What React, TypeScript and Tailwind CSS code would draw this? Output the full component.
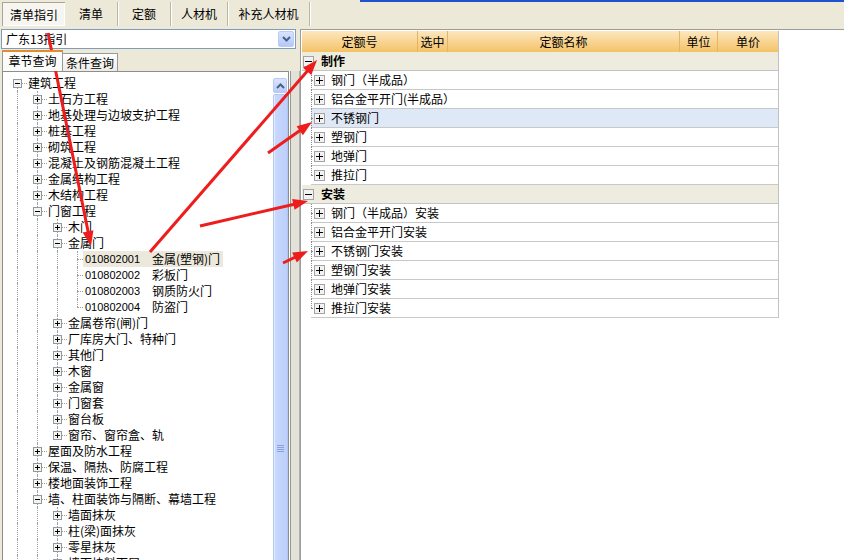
import React from "react";

type TNode = { label: string; code?: string; open?: boolean; hl?: boolean; children?: TNode[] };

const L = (label: string): TNode => ({ label, children: [] });
const leaf = (code: string, label: string, hl = false): TNode => ({ label, code, hl });

const roots: TNode[] = [
  {
    label: "建筑工程",
    open: true,
    children: [
      L("土石方工程"),
      L("地基处理与边坡支护工程"),
      L("桩基工程"),
      L("砌筑工程"),
      L("混凝土及钢筋混凝土工程"),
      L("金属结构工程"),
      L("木结构工程"),
      {
        label: "门窗工程",
        open: true,
        children: [
          L("木门"),
          {
            label: "金属门",
            open: true,
            children: [
              leaf("010802001", "金属(塑钢)门", true),
              leaf("010802002", "彩板门"),
              leaf("010802003", "钢质防火门"),
              leaf("010802004", "防盗门"),
            ],
          },
          L("金属卷帘(闸)门"),
          L("厂库房大门、特种门"),
          L("其他门"),
          L("木窗"),
          L("金属窗"),
          L("门窗套"),
          L("窗台板"),
          L("窗帘、窗帘盒、轨"),
        ],
      },
      L("屋面及防水工程"),
      L("保温、隔热、防腐工程"),
      L("楼地面装饰工程"),
      {
        label: "墙、柱面装饰与隔断、幕墙工程",
        open: true,
        children: [L("墙面抹灰"), L("柱(梁)面抹灰"), L("零星抹灰"), L("墙面块料面层"), L("柱(梁)面镶贴块料")],
      },
      L("天棚工程"),
    ],
  },
  L("安装工程"),
];

type Row = { node: TNode; depth: number; anc: boolean[]; hasNext: boolean; first: boolean };

function flatten(nodes: TNode[], depth: number, anc: boolean[], out: Row[]) {
  nodes.forEach((n, i) => {
    const hasNext = i < nodes.length - 1;
    out.push({ node: n, depth, anc, hasNext, first: depth === 0 && i === 0 });
    if (n.open && n.children) flatten(n.children, depth + 1, [...anc, hasNext], out);
  });
}

const rows: Row[] = [];
flatten(roots, 0, [], rows);

function TreeBox({ plus }: { plus: boolean }) {
  return (
    <svg width="9" height="9" className="relative block" shapeRendering="crispEdges">
      <rect x="0.5" y="0.5" width="8" height="8" fill="#f4f3ee" stroke="#8f99a3" />
      <line x1="2" y1="4.5" x2="7" y2="4.5" stroke="#000" />
      {plus && <line x1="4.5" y1="2" x2="4.5" y2="7" stroke="#000" />}
    </svg>
  );
}

function GridBox({ plus }: { plus: boolean }) {
  return (
    <svg width="11" height="11" className="relative block" shapeRendering="crispEdges">
      <rect x="0.5" y="0.5" width="10" height="10" fill="#f2f2f2" stroke="#a3a3a3" />
      <line x1="2" y1="5.5" x2="9" y2="5.5" stroke="#000" />
      {plus && <line x1="5.5" y1="2" x2="5.5" y2="9" stroke="#000" />}
    </svg>
  );
}

function TreeRow({ r }: { r: Row }) {
  const n = r.node;
  const isLeaf = !!n.code;
  return (
    <div className="flex h-[16px] items-center">
      {r.anc.map((a, i) => (
        <div key={i} className="relative h-full w-[20px] shrink-0">
          {a && <span className="absolute left-[10px] top-0 h-full border-l border-dotted border-[#a0a0a0]" />}
        </div>
      ))}
      <div
        className={`relative flex h-full shrink-0 items-center justify-center ${isLeaf ? "w-[16px]" : "w-[20px]"}`}
      >
        {!r.first && <span className="absolute left-[10px] top-0 h-[8px] border-l border-dotted border-[#a0a0a0]" />}
        {r.hasNext && <span className="absolute left-[10px] top-[8px] h-[8px] border-l border-dotted border-[#a0a0a0]" />}
        <span
          className={`absolute left-[10px] top-[8px] border-t border-dotted border-[#a0a0a0] ${isLeaf ? "w-[6px]" : "w-[10px]"}`}
        />
        {!isLeaf && <TreeBox plus={!n.open} />}
      </div>
      {isLeaf ? (
        <div className={`flex h-full items-center pl-[2px] pr-[3px] ${n.hl ? "bg-[#ece9dc]" : ""}`}>
          <span className="w-[67px] font-['Liberation_Sans',sans-serif] text-[11px] text-black">{n.code}</span>
          <span className="whitespace-nowrap">{n.label}</span>
        </div>
      ) : (
        <span className="ml-[1px] whitespace-nowrap">{n.label}</span>
      )}
    </div>
  );
}

const groups = [
  { name: "制作", items: ["钢门（半成品）", "铝合金平开门(半成品）", "不锈钢门", "塑钢门", "地弹门", "推拉门"] },
  { name: "安装", items: ["钢门（半成品）安装", "铝合金平开门安装", "不锈钢门安装", "塑钢门安装", "地弹门安装", "推拉门安装"] },
];

function Arrow({ x1, y1, x2, y2 }: { x1: number; y1: number; x2: number; y2: number }) {
  const dx = x2 - x1;
  const dy = y2 - y1;
  const len = Math.sqrt(dx * dx + dy * dy);
  const ux = dx / len;
  const uy = dy / len;
  const hl = 15;
  const hw = 5.5;
  const bx = x2 - ux * hl;
  const by = y2 - uy * hl;
  const px = -uy * hw;
  const py = ux * hw;
  return (
    <g>
      <line x1={x1} y1={y1} x2={bx + ux * 2} y2={by + uy * 2} stroke="#ee1d1d" strokeWidth="3" />
      <polygon points={`${x2},${y2} ${bx + px},${by + py} ${bx - px},${by - py}`} fill="#ee1d1d" />
    </g>
  );
}

const tabs = [
  { t: "清单", w: "w-[53px]" },
  { t: "定额", w: "w-[53px]" },
  { t: "人材机", w: "w-[57px]" },
  { t: "补充人材机", w: "w-[82px]" },
];

export default function App() {
  return (
    <div className="relative h-[560px] w-[844px] overflow-hidden bg-[#ece9d8] font-['Noto_Sans_CJK_SC',sans-serif] text-[12px] leading-none text-black">
      {/* top tab bar */}
      <div className="flex h-[29px]">
        <div className="flex pl-[2px] pt-[2px]">
          <div className="flex h-[24px] w-[63px] items-center justify-center border-l border-t border-[#a9a596] bg-[#f6f5f0] shadow-[inset_-1px_-1px_0_#ffffff]">
            清单指引
          </div>
          {tabs.map((t) => (
            <div
              key={t.t}
              className={`flex h-[24px] ${t.w} items-center justify-center border-r border-[#b9b5a7] shadow-[1px_0_0_#ffffff]`}
            >
              {t.t}
            </div>
          ))}
        </div>
        <div className="flex-1 pl-[50px]">
          <div className="h-[2px] bg-[#1f52cc]" />
        </div>
      </div>

      <div className="flex">
        {/* left column */}
        <div className="flex w-[300px] shrink-0 flex-col">
          <div className="ml-[1px] flex h-[20px] w-[295px] items-center border border-[#7f9db9] bg-white pl-[4px]">
            <span className="flex-1">广东13指引</span>
            <div className="mr-[1px] flex h-[16px] w-[16px] items-center justify-center rounded-[2px] border border-[#b9ccf5] bg-gradient-to-b from-[#d8e4fd] to-[#b4c8f8]">
              <svg width="9" height="6" viewBox="0 0 9 6">
                <path d="M1 1 L4.5 4.5 L8 1" fill="none" stroke="#4d6185" strokeWidth="2" />
              </svg>
            </div>
          </div>
          <div className="flex h-[22px] items-end pl-[2px]">
            <div className="relative z-10 flex h-[21px] w-[61px] items-center justify-center border-x border-t-[2px] border-x-[#919b9c] border-t-[#e68b2c] bg-[#fbfbf9] pb-[1px]">
              章节查询
            </div>
            <div className="flex h-[18px] w-[55px] items-center justify-center border-r border-t border-[#919b9c] bg-gradient-to-b from-[#ffffff] to-[#ecebe5] pt-[1px]">
              条件查询
            </div>
          </div>
          <div className="flex">
            <div className="relative ml-[2px] flex h-[500px] w-[287px] border border-[#8d8d8d] bg-white">
              <div className="flex-1 overflow-hidden pl-[4px] pt-[3px]">
                {rows.map((r, i) => (
                  <TreeRow key={i} r={r} />
                ))}
              </div>
              <div className="flex w-[15px] shrink-0 flex-col pt-[6px]">
                <div className="flex h-[15px] w-[14px] items-center justify-center rounded-[2px] border border-[#b7c9f3] bg-gradient-to-b from-[#dbe6fd] to-[#b8cbf9]">
                  <svg width="9" height="6" viewBox="0 0 9 6">
                    <path d="M1 5 L4.5 1.5 L8 5" fill="none" stroke="#4d6185" strokeWidth="2" />
                  </svg>
                </div>
                <div className="mt-[1px] flex flex-1 justify-center rounded-[2px] border border-[#b3c6f2] bg-gradient-to-r from-[#c9d8fd] to-[#bccffb] pt-[350px] shadow-[inset_1px_0_0_#e4ecfe]">
                  <div className="flex flex-col gap-[1px]">
                    <div className="h-[1px] w-[7px] bg-[#8aa2dc]" />
                    <div className="h-[1px] w-[7px] bg-[#8aa2dc]" />
                    <div className="h-[1px] w-[7px] bg-[#8aa2dc]" />
                    <div className="h-[1px] w-[7px] bg-[#8aa2dc]" />
                  </div>
                </div>
              </div>
            </div>
            <div className="flex h-[500px] flex-1">
              <div className="w-[1px] bg-white" />
              <div className="w-[1px] bg-[#8e9a8e]" />
              <div className="flex-1 bg-[#e4e2d8]" />
              <div className="w-[1px] bg-[#b0b0b0]" />
            </div>
          </div>
        </div>

        {/* right panel */}
        <div className="h-[531px] flex-1 border-l border-t border-[#9c9c9c] bg-white pl-[1px] pt-[1px]">
          <div className="w-[477px] border-r border-[#c2c2c2]">
            <div className="flex h-[21px] bg-gradient-to-b from-[#fce7bd] to-[#f4c265] text-[12px]">
              <div className="flex w-[116px] items-center justify-center border-r border-[#e2b566]">定额号</div>
              <div className="flex w-[30px] items-center justify-center border-r border-[#e2b566]">选中</div>
              <div className="flex w-[232px] items-center justify-center border-r border-[#e2b566]">定额名称</div>
              <div className="flex w-[38px] items-center justify-center border-r border-[#e2b566]">单位</div>
              <div className="flex flex-1 items-center justify-center">单价</div>
            </div>
            {groups.map((g, gi) => (
              <div key={g.name}>
                <div className="flex h-[19px] items-center border-b border-[#c4c4c4] bg-[#eeebdf]">
                  <div className="ml-[1px]">
                    <GridBox plus={false} />
                  </div>
                  <span className="ml-[7px] font-bold">{g.name}</span>
                </div>
                {g.items.map((it, i) => {
                  const last = i === g.items.length - 1;
                  const hl = gi === 0 && i === 2;
                  return (
                    <div key={it} className="flex h-[19px]">
                      <div className="w-[9px] shrink-0" />
                      <div
                        className={`relative flex flex-1 items-center border-b border-[#c8c8c8] ${hl ? "bg-[#dfe8f6]" : "bg-white"}`}
                      >
                        <span
                          className={`absolute left-0 top-0 border-l border-dotted border-[#8a8a8a] ${last ? "h-[9px]" : "h-[19px]"}`}
                        />
                        <span className="absolute left-0 top-[9px] w-[4px] border-t border-dotted border-[#8a8a8a]" />
                        <div className="ml-[3px]">
                          <GridBox plus={true} />
                        </div>
                        <span className="ml-[6px] whitespace-nowrap">{it}</span>
                      </div>
                    </div>
                  );
                })}
              </div>
            ))}
          </div>
        </div>
      </div>

      {/* annotation arrows */}
      <svg className="pointer-events-none absolute left-0 top-0" width="844" height="560">
        <Arrow x1={48} y1={33} x2={91} y2={246} />
        <Arrow x1={150} y1={252} x2={317} y2={60} />
        <Arrow x1={268} y1={153} x2={312} y2={122} />
        <Arrow x1={200} y1={226} x2={308} y2={201} />
        <Arrow x1={283} y1={263} x2={308} y2={251} />
      </svg>
    </div>
  );
}
